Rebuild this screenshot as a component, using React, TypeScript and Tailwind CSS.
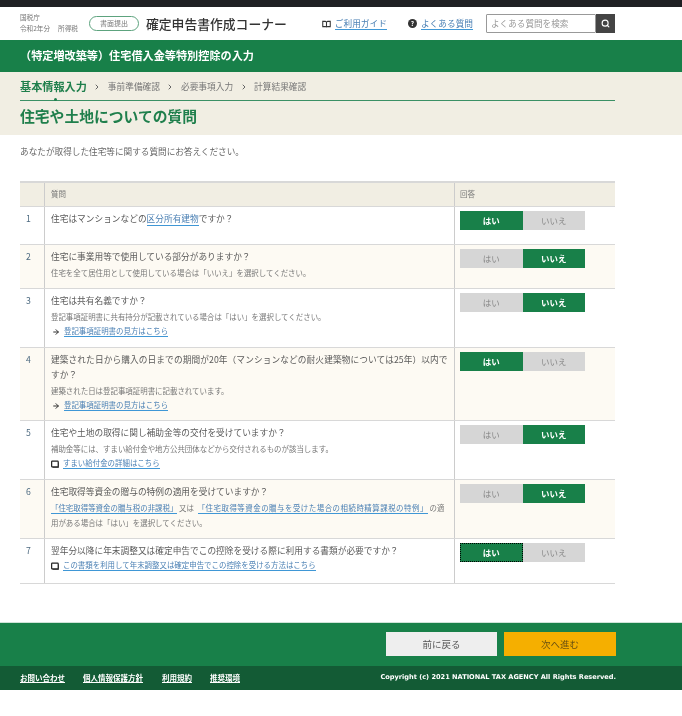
import React from "react";
import { ArrowRight, ChevronRight, Search } from "lucide-react";

// ── Small pieces ──────────────────────────────────────────────────────────────

function A({ children, className = "" }: { children: React.ReactNode; className?: string }) {
  return (
    <a className={`text-[#4b80b4] border-b border-[#3f97d6] leading-[10px] inline-block ${className}`}>
      {children}
    </a>
  );
}

function BookIcon() {
  return (
    <svg viewBox="0 0 10 10" className="w-[8px] h-[8px] mr-[4px] shrink-0">
      <rect x="0.8" y="1.4" width="8.2" height="7.2" rx="0.8" fill="none" stroke="#222" strokeWidth="1.5" />
      <path d="M2 9.4h7.6V3" fill="none" stroke="#222" strokeWidth="0.9" />
    </svg>
  );
}

function ArrowIcon() {
  return <ArrowRight className="w-[8px] h-[8px] mr-[4px] ml-[1px] shrink-0 text-[#333]" strokeWidth={3} />;
}

function Note({ children }: { children: React.ReactNode }) {
  return <p className="text-[7.45px] leading-[15px] text-[#777] pt-[1px]">{children}</p>;
}

function LinkLine({ icon, children }: { icon: React.ReactNode; children: React.ReactNode }) {
  return (
    <p className="flex items-center text-[7.45px] leading-[15px] pt-[2px]">
      {icon}
      <A>{children}</A>
    </p>
  );
}

function StepArrow() {
  return (
    <span className="w-[21px] flex justify-center">
      <ChevronRight className="w-[8px] h-[8px] text-[#666]" strokeWidth={3} />
    </span>
  );
}

function YesNo({ value, focus }: { value: "yes" | "no"; focus?: boolean }) {
  const on = "bg-[#188049] text-white font-bold";
  const off = "bg-[#d6d6d6] text-[#888]";
  return (
    <div className="flex text-[8.5px] leading-[19px] text-center">
      <span className={`w-[62.5px] h-[19px] ${value === "yes" ? on : off} ${focus ? "border border-dotted border-black leading-[17px]" : ""}`}>
        はい
      </span>
      <span className={`w-[62.5px] h-[19px] ${value === "no" ? on : off}`}>いいえ</span>
    </div>
  );
}

const rows: {
  h: string;
  answer: "yes" | "no";
  focus?: boolean;
  body: React.ReactNode;
}[] = [
  {
    h: "h-[38px]",
    answer: "yes",
    body: (
      <p>
        住宅はマンションなどの<A className="leading-[12px]">区分所有建物</A>ですか？
      </p>
    ),
  },
  {
    h: "h-[44px]",
    answer: "no",
    body: (
      <>
        <p>住宅に事業用等で使用している部分がありますか？</p>
        <Note>住宅を全て居住用として使用している場合は「いいえ」を選択してください。</Note>
      </>
    ),
  },
  {
    h: "h-[59px]",
    answer: "no",
    body: (
      <>
        <p>住宅は共有名義ですか？</p>
        <Note>登記事項証明書に共有持分が記載されている場合は「はい」を選択してください。</Note>
        <LinkLine icon={<ArrowIcon />}>登記事項証明書の見方はこちら</LinkLine>
      </>
    ),
  },
  {
    h: "h-[73px]",
    answer: "yes",
    body: (
      <>
        <p className="tracking-[0.09px]">
          建築された日から購入の日までの期間が20年（マンションなどの耐火建築物については25年）以内で
          <br />
          すか？
        </p>
        <Note>建築された日は登記事項証明書に記載されています。</Note>
        <LinkLine icon={<ArrowIcon />}>登記事項証明書の見方はこちら</LinkLine>
      </>
    ),
  },
  {
    h: "h-[59px]",
    answer: "no",
    body: (
      <>
        <p>住宅や土地の取得に関し補助金等の交付を受けていますか？</p>
        <Note>補助金等には、すまい給付金や地方公共団体などから交付されるものが該当します。</Note>
        <LinkLine icon={<BookIcon />}>すまい給付金の詳細はこちら</LinkLine>
      </>
    ),
  },
  {
    h: "h-[59px]",
    answer: "no",
    body: (
      <>
        <p>住宅取得等資金の贈与の特例の適用を受けていますか？</p>
        <Note>
          <A>「住宅取得等資金の贈与税の非課税」</A> 又は <A className="ml-[2px] tracking-[0.5px]">「住宅取得等資金の贈与を受けた場合の相続時精算課税の特例」</A> の適
          <br />
          用がある場合は「はい」を選択してください。
        </Note>
      </>
    ),
  },
  {
    h: "h-[45px]",
    answer: "yes",
    focus: true,
    body: (
      <>
        <p>翌年分以降に年末調整又は確定申告でこの控除を受ける際に利用する書類が必要ですか？</p>
        <LinkLine icon={<BookIcon />}>この書類を利用して年末調整又は確定申告でこの控除を受ける方法はこちら</LinkLine>
      </>
    ),
  },
];

// ── Page ──────────────────────────────────────────────────────────────────────

export default function App() {
  return (
    <div className="w-[682px] h-[716px] bg-white overflow-hidden blur-[0.35px] text-[#555] font-['Noto_Sans_CJK_JP','Noto_Sans',sans-serif]">
      <div className="h-[7px] bg-[#1f2023]" />

      {/* Header */}
      <header className="h-[33px] px-[20px] flex items-center">
        <div className="w-[69px] text-[6.6px] leading-[11px] text-[#777] mt-[-2px] whitespace-nowrap">
          <p>国税庁</p>
          <p className="flex gap-[8px]">
            <span>令和2年分</span>
            <span>所得税</span>
          </p>
        </div>
        <span className="w-[50px] h-[15px] rounded-full border border-[#5da37e] text-[7px] leading-[13px] text-center text-[#777]">
          書面提出
        </span>
        <h1 className="ml-[7px] text-[12.8px] font-medium text-[#333] whitespace-nowrap">確定申告書作成コーナー</h1>
        <svg viewBox="0 0 12 10" className="ml-[35px] w-[9px] h-[8px] shrink-0">
          <path d="M1 1.5h3.5L6 2.5l1.5-1H11v7H7.5L6 9 4.5 8.5H1zM6 2.5V9" fill="none" stroke="#333" strokeWidth="1.4" />
        </svg>
        <A className="ml-[4px] text-[8.7px] leading-[11px]">ご利用ガイド</A>
        <span className="ml-[21px] w-[9px] h-[9px] rounded-full bg-[#333] text-white text-[6.5px] leading-[9px] text-center font-bold">?</span>
        <A className="ml-[4px] text-[8.7px] leading-[11px]">よくある質問</A>
        <div className="ml-[13px] w-[110px] h-[19px] border border-[#999] rounded-[1px] pl-[4px] text-[8.6px] leading-[17px] text-[#999] whitespace-nowrap">
          よくある質問を検索
        </div>
        <span className="w-[19px] h-[19px] bg-[#444] flex items-center justify-center">
          <Search className="w-[9px] h-[9px] text-white" strokeWidth={3} />
        </span>
      </header>

      {/* Green title band */}
      <div className="h-[32px] bg-[#188049] px-[20px] text-white text-[11.15px] font-bold leading-[31px] whitespace-nowrap">
        （特定増改築等）住宅借入金等特別控除の入力
      </div>

      {/* Steps and page title */}
      <div className="h-[63px] bg-[#f1eee3] px-[20px]">
        <div className="w-[595px] h-[29px] flex items-center border-b border-[#3b9065] relative whitespace-nowrap text-[8.7px] text-[#777] pt-[1px]">
          <span className="text-[11.15px] font-bold text-[#1f7f4c]">基本情報入力</span>
          <StepArrow />
          <span>事前準備確認</span>
          <StepArrow />
          <span>必要事項入力</span>
          <StepArrow />
          <span>計算結果確認</span>
          <span className="absolute left-[34px] bottom-[-1px] w-[3px] h-[3px] rounded-full bg-[#1f7f4c]" />
        </div>
        <h2 className="mt-[4px] text-[14.8px] leading-[22px] font-bold text-[#1f7f4c] whitespace-nowrap">
          住宅や土地についての質問
        </h2>
      </div>

      <p className="mt-[9px] ml-[20px] text-[8.65px] leading-[14px] text-[#666]">
        あなたが取得した住宅等に関する質問にお答えください。
      </p>

      {/* Question table */}
      <div className="mt-[23px] mx-[20px] w-[595px] text-[8.7px] leading-[15px] text-[#5a5a5a]">
        <div className="flex h-[26px] bg-[#f1eee3] border-t-2 border-b border-[#d8d8d8] text-[7.5px] leading-[22px] text-[#777]">
          <div className="w-[25px] border-r border-[#ccc]" />
          <div className="w-[410px] pl-[6px] border-r border-[#ccc]">質問</div>
          <div className="pl-[5px]">回答</div>
        </div>
        {rows.map((row, i) => (
          <div key={i} className={`flex border-b border-[#d8d8d8] ${row.h} ${i % 2 === 1 ? "bg-[#fdfaf3]" : "bg-white"}`}>
            <div className="w-[25px] border-r border-[#ccc] pl-[6px] pt-[4px] text-[#4d6a80]">{i + 1}</div>
            <div className="w-[410px] pl-[6px] pt-[4px] border-r border-[#ccc] whitespace-nowrap">{row.body}</div>
            <div className="pl-[5px] pt-[4px]">
              <YesNo value={row.answer} focus={row.focus} />
            </div>
          </div>
        ))}
      </div>

      {/* Footer */}
      <div className="mt-[38px] h-[44px] bg-[#188049] border-t border-[#cfe3d8] flex justify-end gap-[7px] pt-[9px] pr-[66px]">
        <button className="w-[111px] h-[24px] bg-[#eeeeee] text-[#555] text-[9.5px]">前に戻る</button>
        <button className="w-[112px] h-[24px] bg-[#f5af00] text-[#6b5210] text-[9.5px]">次へ進む</button>
      </div>
      <div className="h-[24px] bg-[#135b35] px-[20px] flex items-center text-[7.5px] font-bold text-white whitespace-nowrap">
        <span className="underline w-[63px]">お問い合わせ</span>
        <span className="underline w-[79px]">個人情報保護方針</span>
        <span className="underline w-[48px]">利用規約</span>
        <span className="underline w-[60px]">推奨環境</span>
        <span className="ml-auto mr-[46px] text-[6.6px] font-['DejaVu_Sans',sans-serif]">
          Copyright (c) 2021 NATIONAL TAX AGENCY All Rights Reserved.
        </span>
      </div>
    </div>
  );
}
